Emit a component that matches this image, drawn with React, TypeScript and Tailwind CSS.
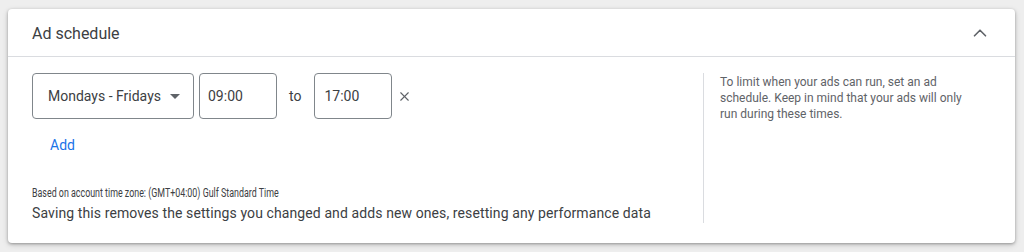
import { ChevronUp, X } from "lucide-react";

export default function App() {
  return (
    <div className="w-[1024px] h-[252px] bg-[#eeeeee] pt-[9px] pl-[8px] font-['Roboto',sans-serif] text-[#3c4043]">
      <div className="w-[1007px] h-[234px] bg-white rounded-[4px] shadow-[0_1px_3px_rgba(0,0,0,0.3),0_2px_6px_rgba(0,0,0,0.15)] flex flex-col">
        <div className="h-[48px] shrink-0 flex items-center justify-between pl-[24px] pr-[24px] border-b border-[#dadce0]">
          <span className="text-[16px] pt-[2px]">Ad schedule</span>
          <ChevronUp className="w-[22px] h-[22px] text-[#5f6368]" strokeWidth={1.8} />
        </div>
        <div className="flex flex-1 pt-[16px]">
          <div className="w-[696px] pl-[24px] border-r border-[#dadce0] mb-[24px]">
            <div className="flex items-center">
              <div className="w-[162px] h-[46px] border border-[#80868b] rounded-[4px] flex items-center pl-[15px] text-[14px]">
                <span>Mondays - Fridays</span>
                <span className="ml-[9px] w-0 h-0 border-l-[5px] border-r-[5px] border-t-[5px] border-l-transparent border-r-transparent border-t-[#5f6368]"></span>
              </div>
              <div className="ml-[5px] w-[78px] h-[46px] border border-[#80868b] rounded-[4px] flex items-center pl-[8px] text-[14px]">
                09:00
              </div>
              <span className="ml-[12px] mr-[13px] text-[14px]">to</span>
              <div className="w-[78px] h-[46px] border border-[#80868b] rounded-[4px] flex items-center pl-[9px] text-[14px]">
                17:00
              </div>
              <X className="ml-[5px] w-[15px] h-[15px] text-[#5f6368]" strokeWidth={1.8} />
            </div>
            <div className="mt-[18px] pl-[18px] text-[14px] text-[#1a73e8] leading-[16px]">Add</div>
            <div className="mt-[32px] text-[12.5px] leading-[16px] whitespace-nowrap origin-left scale-x-[0.71]">Based on account time zone: (GMT+04:00) Gulf Standard Time</div>
            <div className="mt-[2px] text-[14px] leading-[20px] tracking-[0.1px]">Saving this removes the settings you changed and adds new ones, resetting any performance data</div>
          </div>
          <div className="pl-[16px] pt-[1px] w-[272px] text-[12px] leading-[16px] text-[#5f6368]">
            To limit when your ads can run, set an ad schedule. Keep in mind that your ads will only run during these times.
          </div>
        </div>
      </div>
    </div>
  );
}
